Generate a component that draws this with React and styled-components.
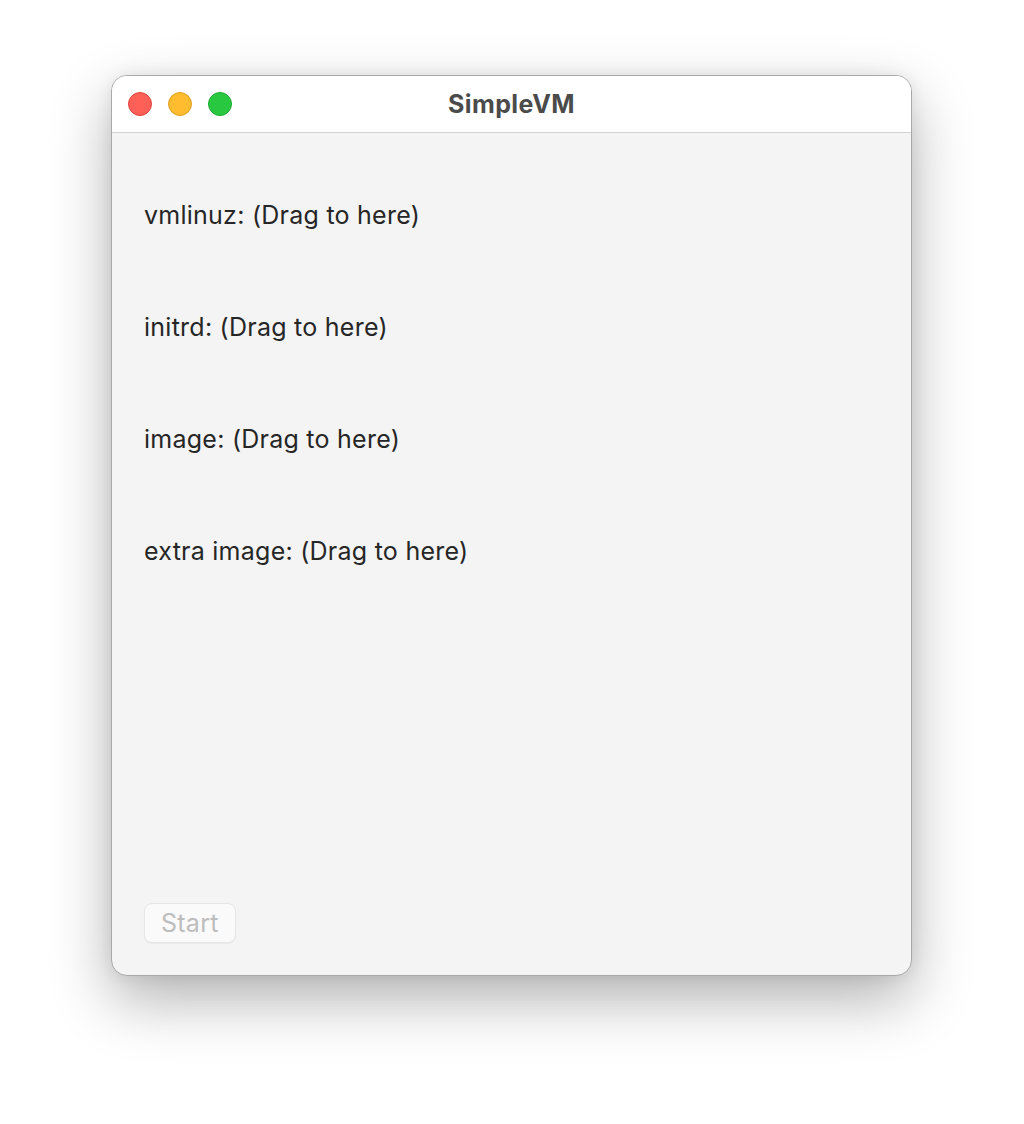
import React from 'react';
import styled, { createGlobalStyle } from 'styled-components';

const GlobalStyle = createGlobalStyle`
  html, body {
    margin: 0;
    padding: 0;
    background: #ffffff;
  }
  body {
    font-family: Inter, "Noto Sans", "Liberation Sans", sans-serif;
    -webkit-font-smoothing: antialiased;
  }
`;

const Page = styled.div`
  width: 1024px;
  height: 1124px;
  padding: 75px 0 0 111px;
  box-sizing: border-box;
  background: #fff;
`;

const Window = styled.div`
  width: 801px;
  height: 901px;
  border-radius: 16px;
  background: #f4f4f4;
  border: 1px solid #a9a9a9;
  box-sizing: border-box;
  overflow: hidden;
  display: flex;
  flex-direction: column;
  box-shadow: 0 24px 60px rgba(0, 0, 0, 0.3), 0 0 16px rgba(0, 0, 0, 0.08);
`;

const TitleBar = styled.div`
  height: 56px;
  flex: none;
  background: #ffffff;
  border-bottom: 1px solid #d3d3d3;
  display: grid;
  grid-template-columns: 1fr auto 1fr;
  align-items: center;
  padding: 0 16px;
`;

const Lights = styled.div`
  display: flex;
  gap: 16px;
  align-items: center;
`;

const Light = styled.span`
  width: 24px;
  height: 24px;
  border-radius: 50%;
  box-sizing: border-box;
  background: ${(p) => p.$fill};
  border: 1px solid ${(p) => p.$edge};
`;

const Title = styled.h1`
  margin: 0;
  font-size: 25px;
  font-weight: 700;
  color: #4b4b4b;
  letter-spacing: 0.4px;
`;

const Content = styled.div`
  flex: 1;
  display: flex;
  flex-direction: column;
  padding: 68px 32px 32px 32px;
`;

const Fields = styled.div`
  display: flex;
  flex-direction: column;
  gap: 84px;
`;

const Field = styled.div`
  font-size: 25px;
  line-height: 28px;
  letter-spacing: 0.25px;
  color: #262626;
`;

const StartButton = styled.button`
  margin-top: auto;
  align-self: flex-start;
  height: 40px;
  padding: 0 16px;
  border-radius: 8px;
  border: 1px solid #e6e6e6;
  background: #fafafa;
  color: #bdbdbd;
  font-family: inherit;
  font-size: 25px;
  letter-spacing: 0.25px;
  box-shadow: 0 1px 1px rgba(0, 0, 0, 0.04);
`;

const fields = ['vmlinuz', 'initrd', 'image', 'extra image'];

const App = () => {
  return (
    <Page>
      <GlobalStyle />
      <Window>
        <TitleBar>
          <Lights>
            <Light $fill="#fe5f57" $edge="#e2463f" />
            <Light $fill="#febc2e" $edge="#e0a02a" />
            <Light $fill="#28c840" $edge="#1fab33" />
          </Lights>
          <Title>SimpleVM</Title>
          <div />
        </TitleBar>
        <Content>
          <Fields>
            {fields.map((name) => (
              <Field key={name}>{name}: (Drag to here)</Field>
            ))}
          </Fields>
          <StartButton disabled>Start</StartButton>
        </Content>
      </Window>
    </Page>
  );
};

export default App;
